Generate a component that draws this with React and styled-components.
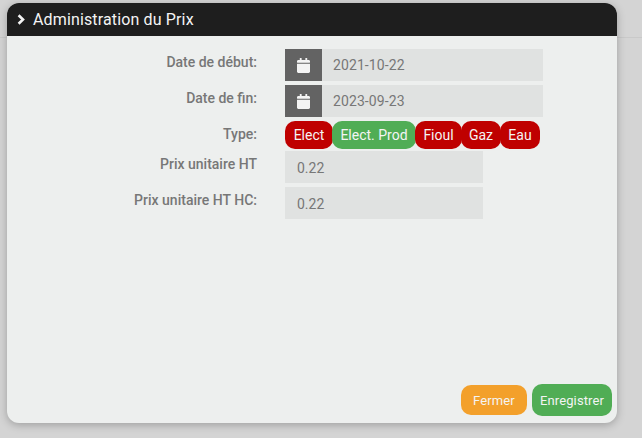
import styled, { createGlobalStyle } from "styled-components"
import { FaCalendar } from "react-icons/fa"

const GlobalStyle = createGlobalStyle`
  html, body {
    margin: 0;
    height: 438px;
    overflow: hidden;
    background: linear-gradient(#d4d4d4 37px, #c9c9c9 37px, #c9c9c9 38px, #d4d4d4 38px);
    font-family: Roboto, "Liberation Sans", sans-serif;
  }
`

const energies = [
  { name: "Elect", width: 48 },
  { name: "Elect. Prod", width: 84, active: true },
  { name: "Fioul", width: 47 },
  { name: "Gaz", width: 40 },
  { name: "Eau", width: 40 },
]

const App = () => {
  return (
    <>
      <GlobalStyle />
      <Page>
        <Modal>
          <Header>
            <svg viewBox="0 0 9 11" fill="none" stroke="currentColor" strokeWidth="2.6">
              <path d="M1.6 1.2 L6 5.5 L1.6 9.8" />
            </svg>
            <h1>Administration du Prix</h1>
          </Header>
          <Form>
            <Label>Date de début:</Label>
            <DateField>
              <IconBox><FaCalendar /></IconBox>
              <DateValue>2021-10-22</DateValue>
            </DateField>
            <Label>Date de fin:</Label>
            <DateField>
              <IconBox><FaCalendar /></IconBox>
              <DateValue>2023-09-23</DateValue>
            </DateField>
            <Label>Type:</Label>
            <Pills>
              {energies.map((e) => (
                <Pill key={e.name} $width={e.width} $active={e.active}>{e.name}</Pill>
              ))}
            </Pills>
            <Label>Prix unitaire HT</Label>
            <PriceField>0.22</PriceField>
            <Label>Prix unitaire HT HC:</Label>
            <PriceField>0.22</PriceField>
          </Form>
          <Footer>
            <FooterButton $color="#f3a02b" $width={66} $height={30}>Fermer</FooterButton>
            <FooterButton $color="#50ad55" $width={80} $height={32}>Enregistrer</FooterButton>
          </Footer>
        </Modal>
      </Page>
    </>
  )
}
export default App

const Page = styled.div`
  padding: 3px 0 0 7px;
`

const Modal = styled.div`
  width: 610px;
  height: 420px;
  display: flex;
  flex-direction: column;
  background: #edefee;
  border-radius: 12px;
  box-shadow: 0 2px 8px rgba(0, 0, 0, 0.25);
  overflow: hidden;
`

const Header = styled.header`
  flex: none;
  height: 33px;
  display: flex;
  align-items: center;
  gap: 7px;
  padding-left: 10px;
  background: #1e1e1e;
  color: #f4f4f4;
  svg {
    width: 9px;
    height: 11px;
  }
  h1 {
    margin: 0;
    font-size: 16px;
    font-weight: 400;
    letter-spacing: 0.14px;
  }
`

const Form = styled.div`
  display: grid;
  grid-template-columns: 250px 1fr;
  column-gap: 28px;
  align-items: start;
  padding-top: 13px;
`

const Label = styled.label`
  text-align: right;
  font-size: 14px;
  font-weight: 500;
  line-height: 16px;
  color: #777;
  padding-top: 5px;
`

const DateField = styled.div`
  display: flex;
  width: 258px;
  height: 32px;
  margin-bottom: 4px;
  background: #e0e2e1;
`

const IconBox = styled.div`
  width: 37px;
  display: flex;
  align-items: center;
  justify-content: center;
  background: #636363;
  color: #f4f4f4;
  svg {
    width: 13px;
    height: 15px;
  }
`

const DateValue = styled.div`
  padding-left: 11px;
  font-size: 14px;
  letter-spacing: 0.1px;
  line-height: 32px;
  color: #777;
`

const Pills = styled.div`
  display: flex;
  height: 28px;
  margin-bottom: 2px;
`

const Pill = styled.div`
  flex: none;
  width: ${(p) => p.$width}px;
  margin-right: -1px;
  border-radius: 10px;
  background: ${(p) => (p.$active ? "#50ad55" : "#bf0000")};
  color: #f4f4f4;
  font-size: 14px;
  line-height: 28px;
  text-align: center;
`

const PriceField = styled.div`
  width: 186px;
  height: 31px;
  margin-bottom: 4px;
  padding: 1px 0 0 12px;
  background: #e0e2e1;
  font-size: 14px;
  line-height: 32px;
  color: #777;
`

const Footer = styled.footer`
  margin-top: auto;
  display: flex;
  justify-content: flex-end;
  align-items: center;
  gap: 5px;
  padding: 0 5px 7px 0;
`

const FooterButton = styled.button`
  width: ${(p) => p.$width}px;
  height: ${(p) => p.$height}px;
  padding: 0;
  border: none;
  border-radius: 10px;
  background: ${(p) => p.$color};
  color: #f4f4f4;
  font-family: inherit;
  font-size: 13px;
  font-weight: 400;
  letter-spacing: 0.12px;
`
